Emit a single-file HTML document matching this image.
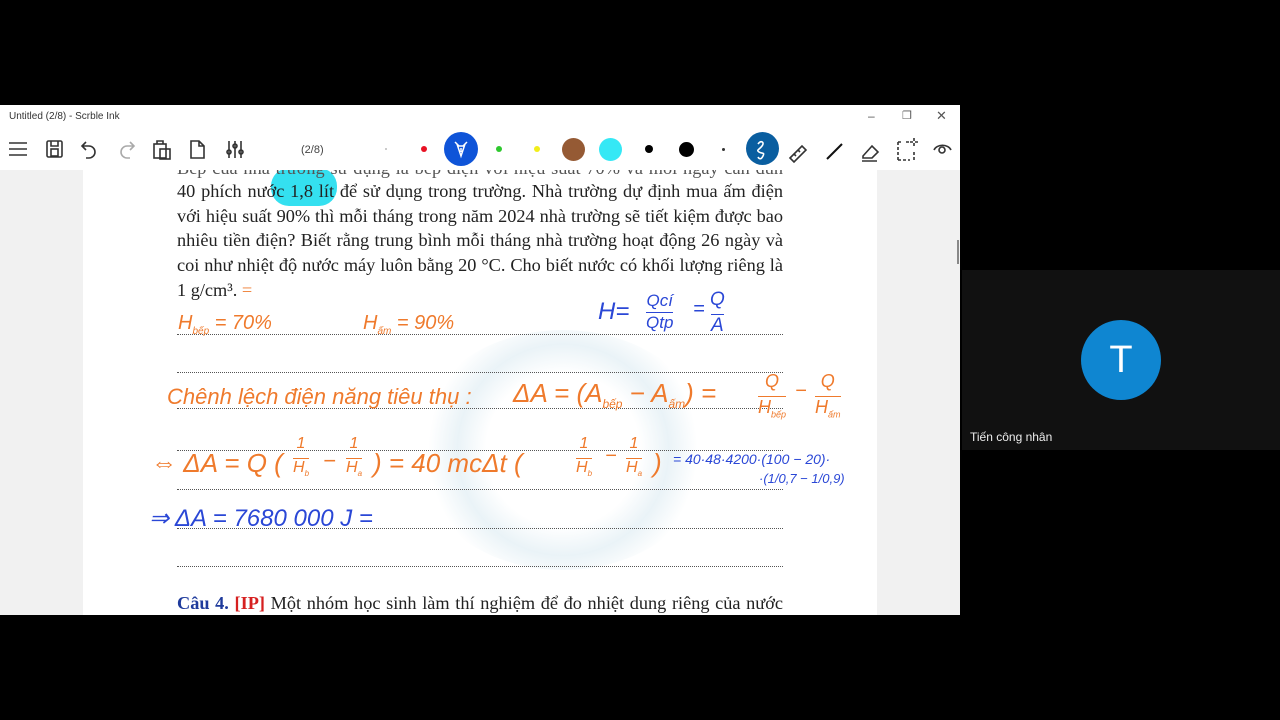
<!DOCTYPE html>
<html><head><meta charset="utf-8"><style>
*{margin:0;padding:0;box-sizing:border-box}
body{width:1280px;height:720px;background:#000;position:relative;overflow:hidden;font-family:"Liberation Sans",sans-serif}
.abs{position:absolute}
#app{left:0;top:105px;width:960px;height:510px;background:#f1f1f1;overflow:hidden}
#page{left:83px;top:65px;width:794px;height:460px;background:#fff}
.txt{position:absolute;left:94px;width:606px;font-family:"Liberation Serif",serif;font-size:18.3px;color:#222;text-align:justify;text-align-last:justify;white-space:nowrap;line-height:24.7px}
.dl{position:absolute;left:94px;width:606px;border-top:1px dotted #555}
.or{color:#ef7a2c;font-family:"Liberation Sans",sans-serif;font-style:italic;position:absolute;white-space:nowrap}
.bl{color:#2a47d6;font-family:"Liberation Sans",sans-serif;font-style:italic;position:absolute;white-space:nowrap}
#title{left:0;top:0;width:960px;height:23px;background:#fff;font-size:10px;color:#333;padding:6px 9px}
#tb{left:0;top:23px;width:960px;height:42px;background:#fff}
.dot{position:absolute;border-radius:50%}
</style></head><body>
<div id="app" class="abs">
 <div id="page" class="abs">
  <div class="abs" style="left:330px;top:160px;width:300px;height:240px;border-radius:50%;background:radial-gradient(circle,rgba(230,240,245,0) 40%,rgba(220,235,242,.6) 55%,rgba(255,255,255,0) 70%)"></div>
  <div class="abs" style="left:188px;top:-2px;width:66px;height:38px;background:#34e0f0;border-radius:18px"></div>
  <div class="txt" style="top:-14px;color:#555">Bếp của nhà trường sử dụng là bếp điện với hiệu suất 70% và mỗi ngày cần đun</div>
  <div class="txt" style="top:9px">40 phích nước 1,8 lít để sử dụng trong trường. Nhà trường dự định mua ấm điện</div>
  <div class="txt" style="top:33.7px">với hiệu suất 90% thì mỗi tháng trong năm 2024 nhà trường sẽ tiết kiệm được bao</div>
  <div class="txt" style="top:58.4px">nhiêu tiền điện? Biết rằng trung bình mỗi tháng nhà trường hoạt động 26 ngày và</div>
  <div class="txt" style="top:83.1px">coi như nhiệt độ nước máy luôn bằng 20 °C. Cho biết nước có khối lượng riêng là</div>
  <div class="txt" style="top:107.8px;text-align-last:left">1 g/cm³. <span style="color:#ef7a2c">=</span></div>
  <div class="dl" style="top:164px"></div><div class="dl" style="top:202px"></div><div class="dl" style="top:238px"></div>
  <div class="dl" style="top:280px"></div><div class="dl" style="top:319px"></div><div class="dl" style="top:358px"></div><div class="dl" style="top:396px"></div>
  <div class="or" style="left:95px;top:142px;font-size:20px">H<sub style="font-size:10px">bếp</sub> = 70%</div>
  <div class="or" style="left:280px;top:142px;font-size:20px">H<sub style="font-size:10px">ấm</sub> = 90%</div>
  <div class="bl" style="left:515px;top:128px;font-size:24px">H=</div>
  <div class="bl" style="left:563px;top:120px;font-size:17px;text-align:center;line-height:22px">Qcí<br><span style="border-top:1.5px solid #2a47d6">Qtp</span></div>
  <div class="bl" style="left:610px;top:128px;font-size:20px">=</div>
  <div class="bl" style="left:627px;top:117px;font-size:19px;text-align:center;line-height:26px">Q<br><span style="border-top:1.5px solid #2a47d6">A</span></div>
  <div class="or" style="left:84px;top:214px;font-size:22px">Chênh lệch điện năng tiêu thụ :</div>
  <div class="or" style="left:430px;top:208px;font-size:26px">ΔA = (A<sub style="font-size:12px">bếp</sub> − A<sub style="font-size:12px">ấm</sub>) =</div>
  <div class="or" style="left:675px;top:198px;font-size:18px;line-height:26px;text-align:center">Q<br><span style="border-top:1.5px solid #ef7a2c">H<sub style="font-size:9px">bếp</sub></span></div>
  <div class="or" style="left:712px;top:210px;font-size:20px">−</div>
  <div class="or" style="left:732px;top:198px;font-size:18px;line-height:26px;text-align:center">Q<br><span style="border-top:1.5px solid #ef7a2c">H<sub style="font-size:9px">ấm</sub></span></div>
  <div class="or" style="left:68px;top:278px;font-size:26px">⇔ ΔA = Q (</div>
  <div class="or" style="left:210px;top:262px;font-size:16px;line-height:24px;text-align:center">1<br><span style="border-top:1.5px solid #ef7a2c">H<sub style="font-size:8px">b</sub></span></div>
  <div class="or" style="left:240px;top:278px;font-size:22px">−</div>
  <div class="or" style="left:263px;top:262px;font-size:16px;line-height:24px;text-align:center">1<br><span style="border-top:1.5px solid #ef7a2c">H<sub style="font-size:8px">a</sub></span></div>
  <div class="or" style="left:290px;top:278px;font-size:26px">) = 40 mcΔt (</div>
  <div class="or" style="left:493px;top:262px;font-size:16px;line-height:24px;text-align:center">1<br><span style="border-top:1.5px solid #ef7a2c">H<sub style="font-size:8px">b</sub></span></div>
  <div class="or" style="left:522px;top:275px;font-size:20px">−</div>
  <div class="or" style="left:543px;top:262px;font-size:16px;line-height:24px;text-align:center">1<br><span style="border-top:1.5px solid #ef7a2c">H<sub style="font-size:8px">a</sub></span></div>
  <div class="or" style="left:570px;top:278px;font-size:26px">)</div>
  <div class="bl" style="left:590px;top:281px;font-size:14px">= 40·48·4200·(100 − 20)·</div>
  <div class="bl" style="left:676px;top:300px;font-size:13px;line-height:17px">·(1/0,7 − 1/0,9)</div>
  <div class="bl" style="left:66px;top:334px;font-size:24px">⇒ ΔA = 7680 000 J =</div>
  <div class="txt" style="top:421px;text-align-last:justify"><b style="color:#1f3b9c">Câu 4.</b> <b style="color:#d62020">[IP]</b> Một nhóm học sinh làm thí nghiệm để đo nhiệt dung riêng của nước</div>
 </div>
 <div class="abs" style="left:957px;top:135px;width:2px;height:24px;background:#888"></div>
 <div id="title" class="abs">Untitled (2/8) - Scrble Ink
  <span class="abs" style="left:868px;top:4px;font-size:12px;color:#555">–</span>
  <span class="abs" style="left:902px;top:4px;font-size:11px;color:#555">❐</span>
  <span class="abs" style="left:936px;top:3px;font-size:13px;color:#555">✕</span>
 </div>
 <div id="tb" class="abs">
  <svg class="abs" style="left:0;top:0" width="960" height="42" fill="none" stroke="#333" stroke-width="1.6">
   <path d="M9 15h18M9 21h18M9 27h18"/>
   <rect x="47" y="13" width="15" height="16" rx="1.5"/><rect x="51" y="21" width="7" height="7"/><path d="M51 13v5h7v-5"/>
   <path d="M86 14l-4 4 4 4M82 18h7a5 5 0 0 1 0 12h-3"/>
   <path d="M130 14l4 4-4 4M134 18h-7a5 5 0 0 0 0 12h3" stroke="#aaa"/>
   <rect x="154" y="16" width="12" height="14"/><rect x="160" y="21" width="10" height="10"/><path d="M157 16v-3h6v3"/>
   <path d="M191 13h8l5 5v12h-13z M199 13v5h5"/>
   <path d="M229 13v17M235 13v17M241 13v17"/><circle cx="229" cy="24" r="2"/><circle cx="235" cy="18" r="2"/><circle cx="241" cy="24" r="2"/>
   <path d="M790 30l12-12 4 4-12 12zM794 26l2 2M798 22l2 2" />
   <path d="M827 31l15-15" stroke="#111" stroke-width="2"/>
   <path d="M863 28l9-10 6 6-6 6h-9zM862 33h15"/>
   <path d="M898 14h3M906 14h3M898 32h12M898 14v18M914 24v8M914 10v8M910 14h8" stroke-dasharray="3 2"/>
   <path d="M934 22a9 7 0 0 1 17 0"/><circle cx="942" cy="22" r="3"/>
  </svg>
  <span class="abs" style="left:301px;top:16px;font-size:11px;color:#444">(2/8)</span>
  <div class="dot" style="left:385px;top:20px;width:2px;height:2px;background:#bbb"></div>
  <div class="dot" style="left:421px;top:18px;width:6px;height:6px;background:#e81123"></div>
  <div class="dot" style="left:444px;top:4px;width:34px;height:34px;background:#0f54d8"></div>
  <svg class="abs" style="left:444px;top:4px" width="34" height="34" fill="none" stroke="#fff" stroke-width="1.5"><path d="M11 10l4 4h4l4-4M13 12l4 12 4-12M17 16v4"/></svg>
  <div class="dot" style="left:496px;top:18px;width:6px;height:6px;background:#2ec82e"></div>
  <div class="dot" style="left:534px;top:18px;width:6px;height:6px;background:#f2ee1a"></div>
  <div class="dot" style="left:562px;top:10px;width:23px;height:23px;background:#955a34"></div>
  <div class="dot" style="left:599px;top:10px;width:23px;height:23px;background:#35e8f5"></div>
  <div class="dot" style="left:645px;top:17px;width:8px;height:8px;background:#000"></div>
  <div class="dot" style="left:679px;top:14px;width:15px;height:15px;background:#000"></div>
  <div class="dot" style="left:722px;top:20px;width:3px;height:3px;background:#333"></div>
  <div class="dot" style="left:746px;top:4px;width:33px;height:33px;background:#0a5ea0"></div>
  <svg class="abs" style="left:746px;top:4px" width="33" height="33" fill="none" stroke="#fff" stroke-width="1.6"><path d="M12 12c3-4 7-2 4 2s-6 4-3 6 6 0 4 4-4 3-5 1"/></svg>
 </div>
</div>
<div class="abs" style="left:962px;top:270px;width:318px;height:180px;background:#111"></div>
<div class="abs" style="left:1081px;top:320px;width:80px;height:80px;border-radius:50%;background:#0f86d1;color:#fff;font-size:38px;text-align:center;line-height:80px">T</div>
<div class="abs" style="left:970px;top:430px;color:#eee;font-size:12px">Tiến công nhân</div>
</body></html>
